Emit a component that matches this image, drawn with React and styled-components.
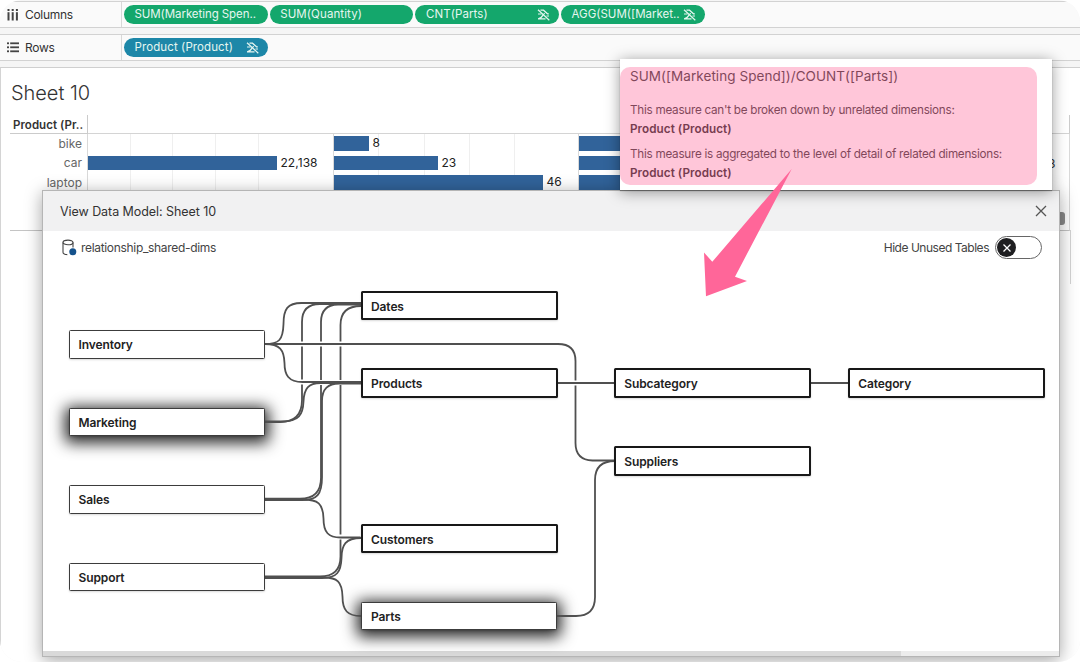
import styled, { createGlobalStyle } from 'styled-components';

const GlobalStyle = createGlobalStyle`
  *, *::before, *::after {
    box-sizing: border-box;
  }

  body {
    margin: 0;
    background: #fff;
    font-family: Inter, 'Open Sans', sans-serif;
    font-size: 12px;
    color: #333;
  }
`;

const Workbook = styled.div`
  position: relative;
  display: flex;
  flex-direction: column;
  width: 1080px;
  height: 662px;
  overflow: hidden;
  border-radius: 22px;
  background: #f5f5f5;
`;

const Shelf = styled.div`
  display: flex;
  flex: none;
  height: 27px;
  margin-top: ${({ $gap }) => $gap}px;
  background: #fafafa;
  border-top: 1px solid #d2d2d2;
  border-bottom: 1px solid #d2d2d2;
`;

const ShelfLabel = styled.div`
  display: flex;
  align-items: center;
  gap: 6px;
  width: 122px;
  padding-left: 7px;
  border-right: 1px solid #d8d8d8;
  letter-spacing: -0.3px;
`;

const Pills = styled.div`
  display: flex;
  align-items: center;
  gap: 2px;
  padding-left: 2px;
`;

const Pill = styled.div`
  display: flex;
  align-items: center;
  justify-content: space-between;
  width: 143.7px;
  height: 19.5px;
  padding: 0 9px 0 10.5px;
  border-radius: 10px;
  background: ${({ $dimension }) => ($dimension ? '#1d87a8' : '#14a76c')};
  color: #e6f6f0;
  font-size: 11.5px;
  letter-spacing: ${({ $spacing }) => $spacing}px;
  line-height: 19px;
  white-space: nowrap;
`;

const Sheet = styled.div`
  flex: 1;
  margin-top: 6px;
  padding: 12px 10px 0 9px;
  background: #fff;
  border-top: 1px solid #cfcfcf;
  border-left: 1px solid #d4d4d4;
`;

const SheetTitle = styled.h1`
  margin: 0;
  height: 35px;
  padding-left: 1px;
  font-size: 20px;
  line-height: 26px;
  font-weight: 300;
  letter-spacing: -0.05px;
  color: #333;
`;

const Viz = styled.div`
  display: grid;
  grid-template-columns: 78px 245.5px 245.5px 490.5px;
  grid-template-rows: 18.5px 97px;
  width: 1059.5px;
`;

const FieldHeader = styled.div`
  padding: 1px 4px 0 3px;
  border-right: 1px solid #cbcbcb;
  border-bottom: 1px solid #cbcbcb;
  font-size: 11.5px;
  font-weight: 600;
  line-height: 18px;
  letter-spacing: 0.05px;
  white-space: nowrap;
`;

const PaneHead = styled.div`
  grid-column: 2 / -1;
  border-bottom: 1px solid #d4d4d4;
  border-right: 1px solid #cbcbcb;
`;

const Members = styled.div`
  display: grid;
  grid-auto-rows: 19.5px;
  border-right: 1px solid #d9d9d9;
  border-bottom: 1px solid #c4c4c4;
`;

const Member = styled.div`
  padding-right: 5px;
  line-height: 20px;
  text-align: right;
  color: #666;
`;

const Pane = styled.div`
  display: grid;
  grid-auto-rows: 19.5px;
  border-right: 1px solid #d9d9d9;
  border-bottom: 1px solid #c4c4c4;
  background: repeating-linear-gradient(
    90deg,
    transparent 0 ${({ $step }) => $step - 1}px,
    #efefef ${({ $step }) => $step - 1}px ${({ $step }) => $step}px
  );
`;

const Mark = styled.div`
  display: flex;
  align-items: center;
  gap: 4px;
  height: 19.5px;
  line-height: 20px;
  letter-spacing: 0.05px;
  color: #222;

  &::before {
    content: '';
    width: ${({ $value }) => $value}px;
    height: 14.5px;
    background: #31639a;
  }
`;

const ClippedLabel = styled.span`
  position: absolute;
  left: 1048px;
  top: 153.5px;
  line-height: 20px;
`;

const VerticalThumb = styled.div`
  position: absolute;
  left: 1057px;
  top: 212px;
  width: 8px;
  height: 13px;
  border-radius: 0 3px 3px 0;
  background: #8b8b8b;
`;

const OuterRule = styled.div`
  position: absolute;
  left: 1070px;
  top: 230px;
  width: 1px;
  height: 54px;
  background: #d4d4d4;
`;

const Dialog = styled.section`
  position: absolute;
  left: 42px;
  top: 190px;
  display: flex;
  flex-direction: column;
  width: 1018px;
  height: 467px;
  background: #fff;
  border: 1px solid #b5b5b5;
  box-shadow: 0 3px 16px rgba(0, 0, 0, 0.36);
`;

const DialogHeader = styled.header`
  display: flex;
  align-items: center;
  justify-content: space-between;
  height: 40px;
  padding: 0 12px 0 17px;
  background: #f1f1f2;
  font-size: 12.5px;
  letter-spacing: -0.06px;
`;

const DialogBar = styled.div`
  display: flex;
  align-items: center;
  justify-content: space-between;
  height: 33px;
  padding: 0 17px 0 19px;
`;

const BarItem = styled.div`
  display: flex;
  align-items: center;
  gap: ${({ $gap }) => $gap}px;
  letter-spacing: ${({ $spacing }) => $spacing}px;
  color: #444;
`;

const Toggle = styled.button`
  display: flex;
  align-items: center;
  width: 47px;
  height: 23px;
  padding: 0 1px;
  border: 1px solid #666;
  border-radius: 12px;
  background: #fff;
`;

const Knob = styled.span`
  display: grid;
  place-items: center;
  width: 19px;
  height: 19px;
  border-radius: 50%;
  background: #1f1f21;
`;

const Canvas = styled.div`
  position: relative;
  flex: 1;
`;

const Links = styled.svg`
  position: absolute;
  left: 0;
  top: 0;
  width: 1016px;
  height: 387px;
  fill: none;
  stroke: #505050;
  stroke-width: 1.8;
`;

const Table = styled.div`
  position: absolute;
  left: ${({ $x }) => $x - 43}px;
  top: ${({ $y }) => $y - 264}px;
  width: ${({ $shared }) => ($shared ? 197 : 196.4)}px;
  height: ${({ $shared }) => ($shared ? 29.5 : 28.5)}px;
  padding-left: ${({ $shared }) => ($shared ? 8.5 : 9)}px;
  border: ${({ $shared }) => ($shared ? '2px solid #181818' : '1px solid #3c3c3c')};
  border-radius: 1.5px;
  background: #fff;
  box-shadow: ${({ $glow }) => ($glow ? '0 3px 15px 4px rgba(0, 0, 0, 0.85)' : '0 1px 2px rgba(0, 0, 0, 0.15)')};
  color: #222;
  font-size: 12px;
  font-weight: 600;
  letter-spacing: -0.1px;
  line-height: ${({ $shared }) => ($shared ? 27 : 28)}px;
`;

const HorizontalScroll = styled.div`
  height: 5px;
  background: #ececec;

  &::before {
    content: '';
    display: block;
    width: 858px;
    height: 5px;
    background: #d9d9d9;
  }
`;

const Tooltip = styled.aside`
  position: absolute;
  left: 620px;
  top: 59px;
  width: 432px;
  height: 131px;
  padding: 7px 0 0 10px;
  background: #fff;
  box-shadow: 0 2px 14px rgba(0, 0, 0, 0.4), 0 1px 1px rgba(0, 0, 0, 0.3);
  white-space: nowrap;
`;

const Formula = styled.div`
  height: 35px;
  font-size: 13.5px;
  line-height: 20px;
  letter-spacing: 0.06px;
`;

const Note = styled.p`
  margin: 0 0 6px;
  font-size: 11.7px;
  line-height: 19px;
  letter-spacing: -0.26px;

  b {
    color: #222;
    font-weight: 600;
    letter-spacing: 0.06px;
  }
`;

const Highlight = styled.div`
  position: absolute;
  left: 0;
  top: 8px;
  width: 417px;
  height: 118px;
  border-radius: 10px;
  background: rgba(255, 104, 155, 0.38);
`;

const Arrow = styled.svg`
  position: absolute;
  left: 700px;
  top: 165px;
  width: 100px;
  height: 136px;
  fill: #ff6699;
`;

const measures = [
  { label: 'SUM(Marketing Spen..', spacing: -0.07 },
  { label: 'SUM(Quantity)', spacing: 0.1 },
  { label: 'CNT(Parts)', unrelated: true, spacing: 0.1 },
  { label: 'AGG(SUM([Market..', unrelated: true, spacing: 0 },
];

const tables = [
  { name: 'Inventory', x: 68.5, y: 330 },
  { name: 'Marketing', x: 68.5, y: 407.5, glow: true },
  { name: 'Sales', x: 68.5, y: 485.3 },
  { name: 'Support', x: 68.5, y: 562.7 },
  { name: 'Dates', x: 360.5, y: 290.5, shared: true },
  { name: 'Products', x: 360.5, y: 368, shared: true },
  { name: 'Customers', x: 360.5, y: 523.5, shared: true },
  { name: 'Parts', x: 361, y: 601.5, glow: true },
  { name: 'Subcategory', x: 613.7, y: 368, shared: true },
  { name: 'Suppliers', x: 613.7, y: 446, shared: true },
  { name: 'Category', x: 847.7, y: 368, shared: true },
];

function UnrelatedIcon() {
  return (
    <svg width="13" height="12" viewBox="0 0 13 12" fill="none" stroke="currentColor" strokeWidth="1.2">
      <path d="M1 .8 12.300 11.200" />
      <path d="M3.500 1.200h3l4 3.600h1.300M1 5h3.500M8 4.500c-2.500 0-2.500 5.300-7 5.300M1 9.800h7.500M9.500 7h2.500" />
    </svg>
  );
}

function ColumnsIcon() {
  return (
    <svg width="12" height="12" viewBox="0 0 12 12" fill="#444">
      {[0.5, 4.7, 8.9].map((x) => (
        <g key={x}>
          <rect x={x} y="0" width="2" height="2" />
          <rect x={x} y="3.2" width="2" height="8.3" />
        </g>
      ))}
    </svg>
  );
}

function RowsIcon() {
  return (
    <svg width="12" height="12" viewBox="0 0 12 12" fill="#444">
      {[0.4, 4.4, 8.4].map((y) => (
        <g key={y}>
          <rect x="0" y={y} width="2" height="1.8" />
          <rect x="3.2" y={y} width="8.8" height="1.8" />
        </g>
      ))}
    </svg>
  );
}

function DatasourceIcon() {
  return (
    <svg width="15" height="17" viewBox="0 0 15 17" fill="none" stroke="#444" strokeWidth="1.1">
      <ellipse cx="6" cy="3.4" rx="5" ry="2.3" />
      <path d="M1 3.4v9.8c0 1.3 1.8 2.3 4.3 2.4M11 3.4v5" />
      <circle cx="10.8" cy="12.7" r="3.5" fill="#15528c" stroke="none" />
    </svg>
  );
}

function Connections() {
  return (
    <Links viewBox="43 264 1016 387">
      {/* vertical runs, drawn first so the horizontal ones can cut across them */}
      <path d="M265 422h15q22 0 22-22V322q0-18 18-18h41" />
      <path d="M265 498.700h35q21 0 21-21V322q0-17 17-17.500h23" />
      <path d="M265 576.500h55q20.500 0 20.500-20V325q0-19 20.500-19" />
      <path d="M558 344q17.500 0 17.500 17V443q0 17 17 17.500h22" />
      <g stroke="#fff" strokeWidth="5">
        <path d="M299 344H305M318 344H324M338 344H344" />
        <path d="M299 382H305M318 382.500H325M338 382.500H344" />
        <path d="M572 383H579M338 537H344" />
      </g>
      <path d="M265 344c14 0 18-4 18.500-20 0-15 4-21 18-21h59.500" />
      <path d="M265 344c15 0 19 6 19.500 19 0 12 4 19 18 19h58.500" />
      <path d="M265 344H559" />
      <path d="M265 421.500h17c17 0 21-7 21.500-20 .5-13 5-18.500 17-18.500h40" />
      <path d="M265 500.200h37c15 0 20-6 20-23V401q0-18 18-17.500h21" />
      <path d="M265 499.500h38c15 0 20 4 20.500 19 0 14 5 19 17 19h20" />
      <path d="M265 578h57c15 0 19-6 19.500-20 0-13 4-20 19.500-20" />
      <path d="M265 577.500h59c13 0 18 4 18.500 19 0 14 5 19.500 18.500 19.500" />
      <path d="M557 383H615M811 383H849" />
      <path d="M557 616h19q19 0 19-19V480q0-19 20-19" />
    </Links>
  );
}

export default function App() {
  return (
    <>
      <GlobalStyle />
      <Workbook>
        <Shelf $gap={1}>
          <ShelfLabel>
            <ColumnsIcon />
            Columns
          </ShelfLabel>
          <Pills>
            {measures.map((m) => (
              <Pill key={m.label} $spacing={m.spacing}>
                {m.label}
                {m.unrelated && <UnrelatedIcon />}
              </Pill>
            ))}
          </Pills>
        </Shelf>
        <Shelf $gap={6}>
          <ShelfLabel>
            <RowsIcon />
            Rows
          </ShelfLabel>
          <Pills>
            <Pill $dimension $spacing={0.1}>
              Product (Product)
              <UnrelatedIcon />
            </Pill>
          </Pills>
        </Shelf>

        <Sheet>
          <SheetTitle>Sheet 10</SheetTitle>
          <Viz>
            <FieldHeader>Product (Pr..</FieldHeader>
            <PaneHead />
            <Members>
              <Member>bike</Member>
              <Member>car</Member>
              <Member>laptop</Member>
            </Members>
            <Pane $step={42.7}>
              <Mark $value={0} />
              <Mark $value={188.5}>22,138</Mark>
            </Pane>
            <Pane $step={45.3}>
              <Mark $value={35}>8</Mark>
              <Mark $value={104}>23</Mark>
              <Mark $value={209}>46</Mark>
            </Pane>
            <Pane $step={491}>
              <Mark $value={200} />
              <Mark $value={440} />
              <Mark $value={200} />
            </Pane>
          </Viz>
        </Sheet>
        <ClippedLabel>3</ClippedLabel>
        <VerticalThumb />
        <OuterRule />

        <Dialog>
          <DialogHeader>
            View Data Model: Sheet 10
            <svg width="12" height="12" viewBox="0 0 12 12" stroke="#555" strokeWidth="1.3">
              <path d="M1 1l10 10M11 1 1 11" />
            </svg>
          </DialogHeader>
          <DialogBar>
            <BarItem $gap={4} $spacing={-0.32}>
              <DatasourceIcon />
              relationship_shared-dims
            </BarItem>
            <BarItem $gap={6} $spacing={-0.48}>
              Hide Unused Tables
              <Toggle type="button">
                <Knob>
                  <svg width="8" height="8" viewBox="0 0 8 8" stroke="#fff" strokeWidth="1.3">
                    <path d="M.5.5l7 7M7.500.5l-7 7" />
                  </svg>
                </Knob>
              </Toggle>
            </BarItem>
          </DialogBar>
          <Canvas>
            {tables.filter((t) => t.glow).map((t) => (
              <Table key={t.name} $x={t.x} $y={t.y} $glow />
            ))}
            <Connections />
            {tables.map((t) => (
              <Table key={t.name} $x={t.x} $y={t.y} $shared={t.shared}>
                {t.name}
              </Table>
            ))}
          </Canvas>
          <HorizontalScroll />
        </Dialog>

        <Tooltip>
          <Formula>SUM([Marketing Spend])/COUNT([Parts])</Formula>
          <Note>
            This measure can't be broken down by unrelated dimensions:
            <br />
            <b>Product (Product)</b>
          </Note>
          <Note>
            This measure is aggregated to the level of detail of related dimensions:
            <br />
            <b>Product (Product)</b>
          </Note>
          <Highlight />
        </Tooltip>
        <Arrow viewBox="700 165 100 136">
          <path d="M791.700 169 735 276.700 747 281 706 296.300 704 252.500 712.300 261.800Z" />
        </Arrow>
      </Workbook>
    </>
  );
}
